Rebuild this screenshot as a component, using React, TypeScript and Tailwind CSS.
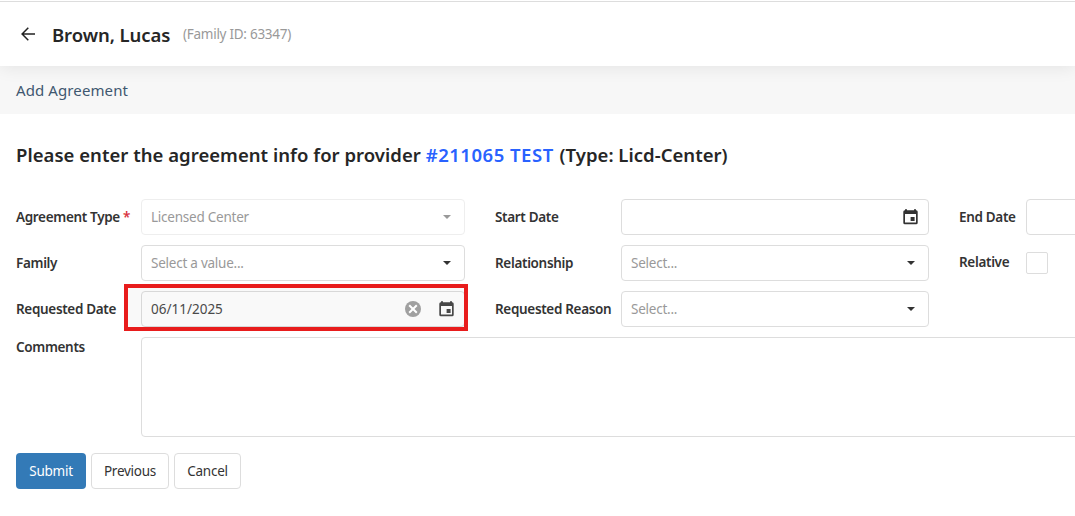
import type { ReactNode } from "react";

function CalendarIcon({ className = "text-[#333333]" }: { className?: string }) {
  return (
    <svg width="15" height="16" viewBox="0 0 15 16" className={`shrink-0 ${className}`} fill="currentColor">
      <path fillRule="evenodd" d="M2 0.3h2v1h7v-1h2v1h0.2a1.5 1.5 0 0 1 1.5 1.5v11a1.5 1.5 0 0 1-1.5 1.5H1.8A1.5 1.5 0 0 1 0.3 13.8V2.8a1.5 1.5 0 0 1 1.5-1.5H2zM2 5v8.5h11V5z" />
      <path d="M7.6 8h4v4h-4z" />
    </svg>
  );
}

function Caret({ className = "text-[#333333]" }: { className?: string }) {
  return (
    <svg width="8" height="4" viewBox="0 0 8 4" className={`shrink-0 ${className}`} fill="currentColor">
      <path d="M0 0h8L4 4z" />
    </svg>
  );
}

function ClearIcon() {
  return (
    <svg width="16" height="16" viewBox="0 0 16 16" className="block shrink-0">
      <circle cx="8" cy="8" r="8" fill="#a0a0a0" />
      <path d="M4.2 4.2l7.6 7.6M11.8 4.2l-7.6 7.6" stroke="#ffffff" strokeWidth="2" />
    </svg>
  );
}

function Label({ children, className = "" }: { children: ReactNode; className?: string }) {
  return (
    <div className={`shrink-0 whitespace-nowrap text-[13.5px] leading-5 font-semibold tracking-[-0.33px] text-[#333333] ${className}`}>
      {children}
    </div>
  );
}

function Select({ value, disabled = false, className = "" }: { value: string; disabled?: boolean; className?: string }) {
  return (
    <div
      className={`flex h-9 shrink-0 items-center justify-between rounded border bg-white pr-[13px] pl-[9px] text-[13.5px] tracking-[-0.24px] text-[#999999] ${
        disabled ? "border-[#eeeeee]" : "border-[#dddddd]"
      } ${className}`}
    >
      <span>{value}</span>
      <Caret className={disabled ? "text-[#999999]" : "text-[#333333]"} />
    </div>
  );
}

export default function App() {
  return (
    <div className="h-[516px] w-[1075px] overflow-hidden bg-white font-['Noto_Sans','Open_Sans',sans-serif]">
      <header className="relative flex h-[66px] items-center bg-white pt-[3px] pl-[21px] shadow-[0_2px_16px_rgba(0,0,0,0.08)] before:absolute before:inset-x-0 before:top-px before:h-px before:bg-[#dddddd]">
        <svg width="15" height="14" viewBox="0 0 15 14" className="mb-[2px] shrink-0" fill="none" stroke="#222222" strokeWidth="1.5">
          <path d="M14 7H1.3M7.3 0.8L1.1 7l6.2 6.2" />
        </svg>
        <h1 className="ml-4 w-[131px] shrink-0 text-[18.5px] font-semibold tracking-[-0.08px] whitespace-nowrap text-[#262626]">Brown, Lucas</h1>
        <span className="text-[13.5px] tracking-[-0.27px] whitespace-nowrap text-[#999999]">(Family ID: 63347)</span>
      </header>

      <div className="flex h-12 items-center bg-[#f7f7f7]/95 pt-px pl-4">
        <span className="text-[15px] tracking-[0.1px] text-[#3f5870]">Add Agreement</span>
      </div>

      <main className="px-4 pt-[27px]">
        <h2 className="h-[58px] text-[18.5px] leading-7 font-semibold tracking-[0.03px] whitespace-nowrap text-[#262626]">
          Please enter the agreement info for provider{" "}
          <span className="mr-px tracking-[0.52px] text-[#2962ff]">#211065 TEST</span> (Type: Licd-Center)
        </h2>

        <div className="flex w-[1200px] flex-col gap-2.5">
          <div className="flex h-9 items-center">
            <Label className="w-[125px]">
              Agreement Type <span className="text-[#d9333f]">*</span>
            </Label>
            <Select value="Licensed Center" disabled className="w-[324px]" />
            <Label className="ml-[30px] w-[126px]">Start Date</Label>
            <div className="flex h-9 w-[308px] shrink-0 items-center justify-end rounded border border-[#dddddd] pr-[10px]">
              <CalendarIcon />
            </div>
            <Label className="ml-[30px] w-[67px]">End Date</Label>
            <div className="h-9 w-[308px] shrink-0 rounded border border-[#dddddd]" />
          </div>

          <div className="flex h-9 items-center">
            <Label className="w-[125px]">Family</Label>
            <Select value="Select a value..." className="w-[324px]" />
            <Label className="ml-[30px] w-[126px]">Relationship</Label>
            <Select value="Select..." className="w-[308px]" />
            <Label className="ml-[30px] w-[67px] pb-[2px]">Relative</Label>
            <div className="size-[22px] shrink-0 rounded-[2px] border border-[#dddddd]" />
          </div>

          <div className="flex h-9 items-center">
            <Label className="w-[125px]">Requested Date</Label>
            <div className="relative flex h-9 w-[324px] shrink-0 items-center rounded border border-[#dddddd] pr-[10px] pl-[9px]">
              <span className="z-10 flex-1 text-[13.5px] text-[#4a4a4a]">06/11/2025</span>
              <span className="z-10">
                <ClearIcon />
              </span>
              <CalendarIcon className="z-10 ml-[18px] text-[#484848]" />
              <div className="absolute -top-[8px] -right-[4px] -bottom-[5px] -left-[18px] border-4 border-[#e81c1c] bg-[#808080]/5" />
            </div>
            <Label className="ml-[30px] w-[126px]">Requested Reason</Label>
            <Select value="Select..." className="w-[308px]" />
          </div>

          <div className="flex h-[100px]">
            <Label className="w-[125px]">Comments</Label>
            <div className="h-[100px] flex-1 rounded border border-[#dddddd]" />
          </div>
        </div>

        <div className="mt-4 flex gap-[5px] text-[13.5px] tracking-[-0.25px] text-[#333333]">
          <button className="h-9 w-[70px] rounded bg-[#337ab7] text-white">Submit</button>
          <button className="h-9 w-[78px] rounded border border-[#dddddd] bg-white">Previous</button>
          <button className="h-9 w-[67px] rounded border border-[#dddddd] bg-white">Cancel</button>
        </div>
      </main>
    </div>
  );
}
